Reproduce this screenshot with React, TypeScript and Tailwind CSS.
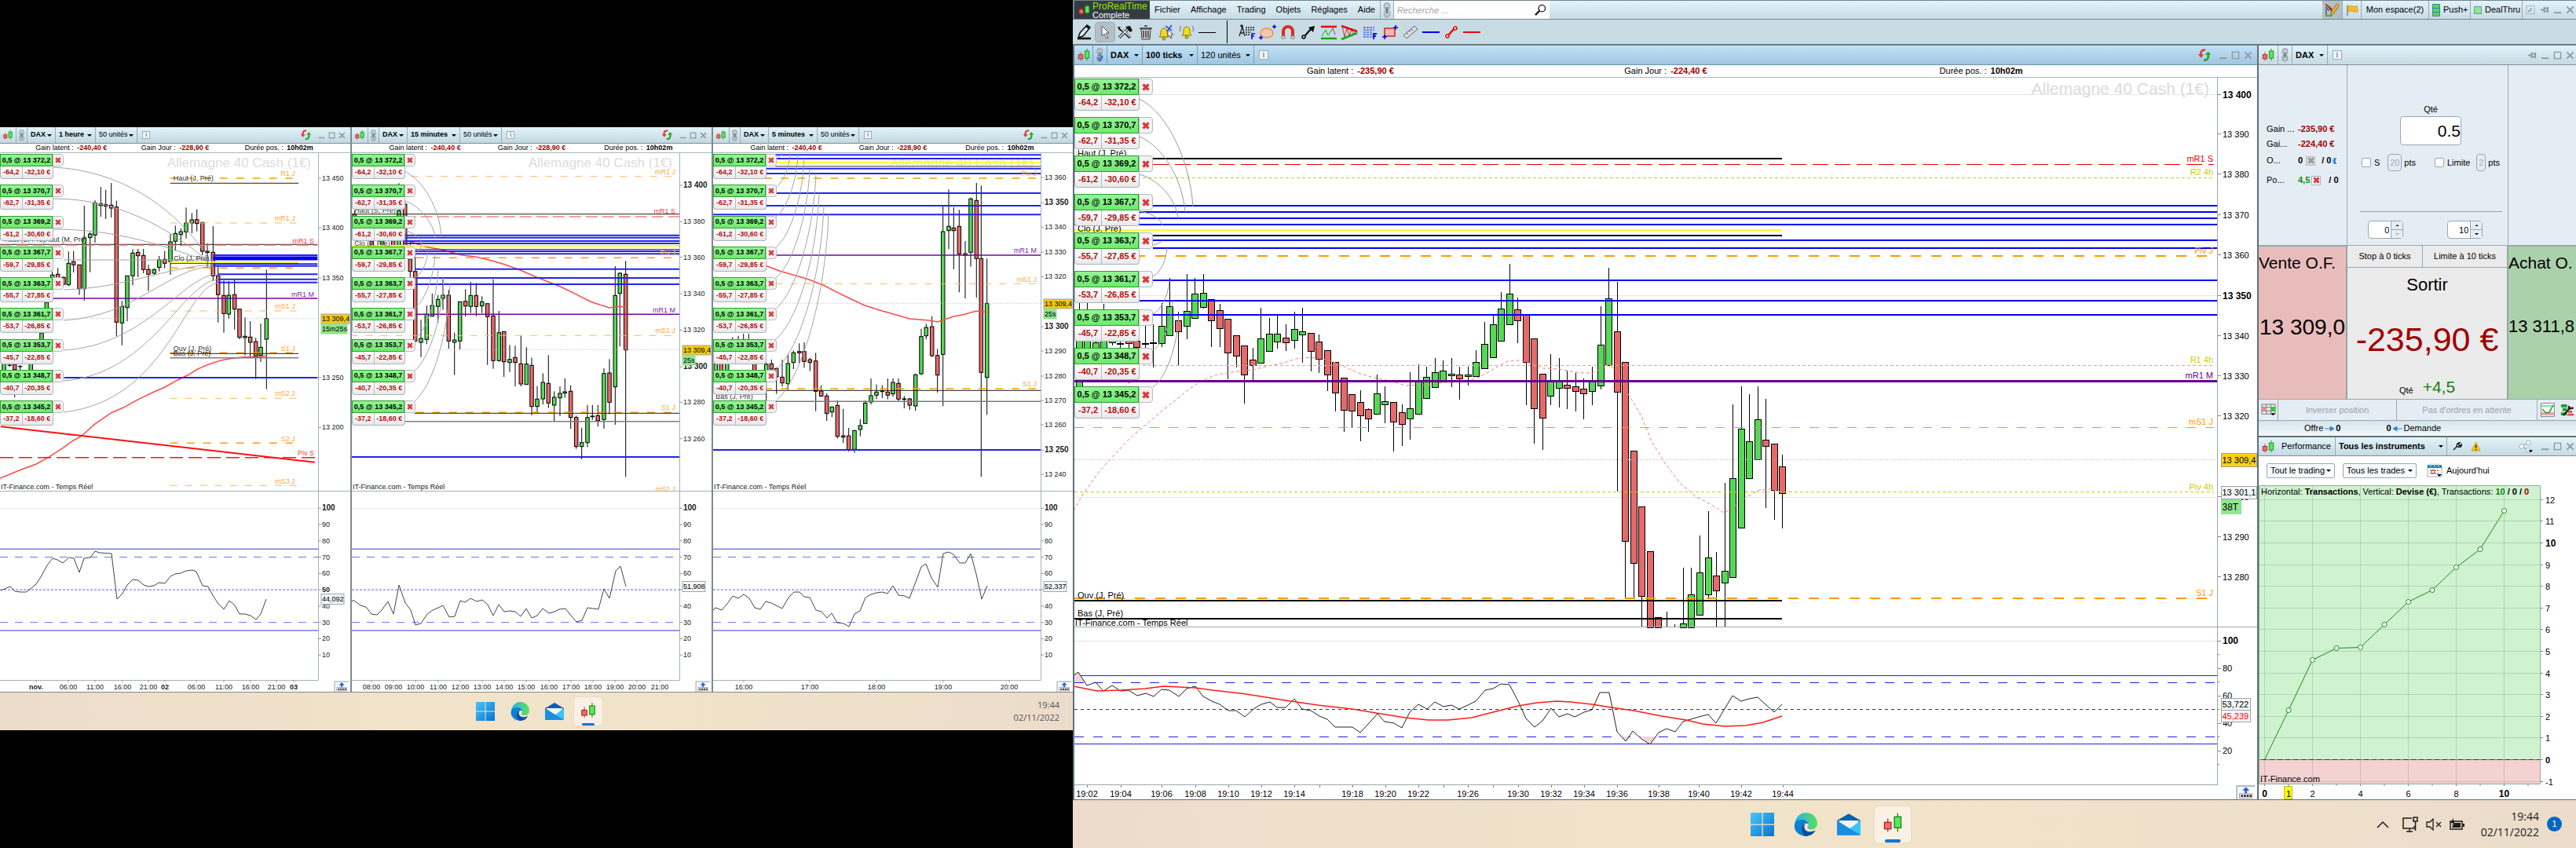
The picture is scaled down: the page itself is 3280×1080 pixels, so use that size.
import type { ReactNode } from "react";

type Candle = number[]; // x, high, low, body top, body bottom, 1 = up / 0 = down
type Level = [y: number, from: number, to: number, kind: string];
type Note = [text: string, x: number, y: number, color: string, anchor?: "end"];
type Tick = [text: string, pos: number, bold?: boolean];

const positions = [
  ["13 372,2", "-64,2", "-32,10 €"],
  ["13 370,7", "-62,7", "-31,35 €"],
  ["13 369,2", "-61,2", "-30,60 €"],
  ["13 367,7", "-59,7", "-29,85 €"],
  ["13 363,7", "-55,7", "-27,85 €"],
  ["13 361,7", "-53,7", "-26,85 €"],
  ["13 353,7", "-45,7", "-22,85 €"],
  ["13 348,7", "-40,7", "-20,35 €"],
  ["13 345,2", "-37,2", "-18,60 €"],
];

const lineStyles: Record<string, { stroke: string; width: number; dash?: string }> = {
  blue: { stroke: "#2323f0", width: 2 },
  blueBlock: { stroke: "#0000f5", width: 5 },
  purple: { stroke: "#6c0a9c", width: 1.4 },
  orange: { stroke: "#ff9d0a", width: 1.6, dash: "10 11" },
  orangeThin: { stroke: "#ffb759", width: 1, dash: "9 10" },
  red: { stroke: "#f01818", width: 1.6, dash: "17 7" },
  redThin: { stroke: "#f78080", width: 1.6, dash: "15 6" },
  black: { stroke: "#1c1c1c", width: 1 },
  gray: { stroke: "#7c7c7c", width: 1.4 },
  yellow: { stroke: "#ffff1e", width: 2 },
  dots: { stroke: "#b4b4b4", width: 1, dash: "1 2" },
  mainBlue: { stroke: "#0000f5", width: 2 },
  mainPurple: { stroke: "#64008c", width: 3 },
  mainOrange: { stroke: "#ff9900", width: 2, dash: "13 13" },
  mainOrangeThin: { stroke: "#ff9900", width: 1, dash: "12 12" },
  mainRed: { stroke: "#e60000", width: 1, dash: "20 8" },
  mainBlack: { stroke: "#000", width: 2 },
  olive: { stroke: "#cccc00", width: 1, dash: "4 3" },
};

const orange = "#ffa733";

/* The three small charts keep their samples at three units per pixel. */
const third = (n: number) => Math.round((n / 3) * 10) / 10;
const candlesOf = (rows: number[][]): Candle[] => rows.map((r) => [...r.slice(0, 5).map(third), r[5]]);
const levelsOf = (rows: Level[]): Level[] => rows.map(([y, a, b, k]) => [third(y), third(a), third(b), k]);
const notesOf = (rows: Note[]): Note[] => rows.map(([t, x, y, c, a]) => [t, third(x), third(y), c, a]);
const ticksOf = (rows: Tick[]): Tick[] => rows.map(([t, p, b]) => [t, third(p), b]);
const pathOf = (n: number[]) => {
  let d = "";
  for (let i = 0; i < n.length; i += 2) d += `${i ? "L" : "M"}${third(n[i])} ${third(n[i + 1])}`;
  return d;
};
const arc = ([x0, y0, x1, y1]: number[]) => {
  const dx = x1 - x0;
  const dy = y1 - y0;
  return `M${x0} ${y0}C${x0 + dx * 0.55} ${y0 + dy * 0.14} ${x1 - dx * 0.05} ${y0 + dy * 0.6} ${x1} ${y1}`;
};

interface SmallChart {
  period: string;
  periodClass: string;
  panelClass: string;
  left: number;
  width: number;
  axis: number;
  candles: Candle[];
  levels: Level[];
  notes: Note[];
  average: string;
  trend?: string;
  arcs: string[];
  prices: Tick[];
  priceTag: number;
  countdown: string;
  rsi: string;
  rsiTag: string;
  rsiTagY: number;
  times: Tick[];
}

const hourChart: SmallChart = {
  period: "1 heure",
  periodClass: "w-[51px]",
  panelClass: "flex-[446_1_0%]",
  left: 0,
  width: 446,
  axis: 405,
  candles: candlesOf([
    [15, 940, 965, 940, 965, 1], [37, 940, 952, 945, 946, 1], [56, 942, 1068, 942, 962, 0], [77, 945, 965, 950, 951, 1],
    [118, 940, 965, 940, 965, 1], [159, 822, 850, 822, 850, 1], [178, 705, 730, 705, 730, 1], [200, 588, 690, 601, 620, 1],
    [221, 574, 615, 598, 612, 0], [243, 606, 640, 610, 636, 0], [262, 511, 643, 556, 638, 1], [281, 509, 591, 550, 562, 0],
    [303, 562, 677, 562, 653, 0], [322, 336, 698, 460, 653, 1], [344, 437, 590, 444, 458, 1], [363, 315, 477, 325, 448, 1],
    [385, 264, 378, 328, 335, 0], [404, 275, 387, 332, 338, 0], [425, 249, 381, 334, 345, 0], [445, 317, 835, 341, 781, 0],
    [466, 700, 869, 721, 784, 1], [486, 603, 777, 604, 725, 1], [507, 502, 640, 517, 604, 1], [527, 501, 609, 514, 527, 0],
    [548, 501, 594, 526, 580, 0], [567, 561, 662, 580, 598, 0], [589, 575, 602, 580, 594, 1], [608, 528, 587, 543, 572, 1],
    [629, 509, 575, 541, 556, 0], [651, 445, 600, 474, 550, 1], [670, 412, 508, 442, 472, 1], [691, 422, 489, 435, 446, 1],
    [711, 343, 461, 402, 436, 1], [733, 364, 441, 390, 402, 1], [752, 350, 434, 389, 404, 0], [773, 398, 525, 400, 510, 0],
    [792, 480, 573, 510, 515, 0], [814, 414, 624, 514, 604, 0], [833, 567, 782, 604, 676, 0], [855, 622, 821, 679, 748, 0],
    [874, 624, 768, 678, 750, 1], [896, 617, 809, 676, 731, 0], [915, 730, 846, 731, 839, 0], [936, 762, 908, 835, 840, 1],
    [956, 777, 913, 838, 858, 0], [977, 841, 998, 855, 911, 0], [996, 786, 933, 877, 908, 1], [1018, 580, 1037, 767, 846, 1],
  ]),
  levels: levelsOf([
    [231, 650, 1118, "orange"], [250, 650, 1140, "black"], [402, 650, 1140, "orangeThin"], [484, 0, 1213, "black"],
    [487, 0, 1213, "redThin"], [556, 650, 1140, "black"], [574, 650, 1118, "orange"], [551, 650, 1140, "yellow"],
    [525, 814, 1213, "blue"], [537, 814, 1213, "blueBlock"], [559, 814, 1213, "blue"], [566, 814, 1213, "blue"],
    [598, 833, 1213, "blue"], [617, 833, 1213, "blue"], [629, 833, 1213, "blue"], [690, 200, 1213, "purple"],
    [738, 650, 1140, "orangeThin"], [767, 250, 1213, "dots"], [898, 650, 1118, "orange"], [901, 650, 1140, "black"],
    [917, 650, 1140, "gray"], [993, 245, 1213, "blue"], [1072, 650, 1140, "orangeThin"], [1243, 650, 1118, "orange"],
    [1298, 0, 1210, "red"], [1405, 650, 1140, "orangeThin"],
  ]),
  notes: notesOf([
    ["R1 J", 1127, 222, orange, "end"], ["mR1 J", 1127, 393, orange, "end"], ["mR1 S", 1200, 479, "#f04040", "end"],
    ["mR1 M", 1200, 683, "#7a1ea8", "end"], ["mS1 J", 1127, 729, orange, "end"], ["S1 J", 1127, 891, orange, "end"],
    ["mS2 J", 1127, 1062, orange, "end"], ["S2 J", 1127, 1235, orange, "end"], ["Piv S", 1200, 1290, "#f04040", "end"],
    ["mS3 J", 1127, 1397, orange, "end"], ["Haut (J, Pré)", 662, 241, "#333"], ["Clo (J, Pré)", 663, 546, "#333"],
    ["Ouv (J, Pré)", 662, 891, "#333"], ["Bas (J, Pré)", 662, 908, "#333"], ["Haut (S, Pré)", 15, 475, "#333"],
    ["Haut (M, Pré)", 170, 475, "#333"],
  ]),
  average: pathOf([0, 1377, 80, 1345, 140, 1322, 185, 1297, 240, 1262, 280, 1233, 310, 1217, 360, 1172, 425, 1127, 470, 1108, 530, 1075, 590, 1046, 630, 1029, 680, 1001, 720, 982, 755, 960, 795, 943, 840, 928, 880, 920, 930, 914, 980, 914, 1018, 910]),
  trend: pathOf([3, 1180, 1202, 1316]),
  arcs: [
    "M68 63C150 67 217 110 258 168", "M68 103C150 103 213 140 258 177", "M68 142C150 142 207 163 263 182", "M81 181H271",
    "M81 219C160 217 213 190 271 187", "M81 258C173 253 213 192 271 189", "M81 296C187 290 233 200 278 199",
    "M81 335C193 327 233 208 278 206", "M81 375C213 360 233 217 278 210",
  ],
  prices: ticksOf([["13 450", 231], ["13 400", 420], ["13 350", 612], ["13 250", 993], ["13 200", 1183]]),
  priceTag: 256,
  countdown: "15m25s",
  rsi: "M1 602L13 597 19 603 26 604 33 604 39 600 46 594 53 583 60 570 67 561 73 563 80 567 88 560 94 561 101 579 107 561 115 560 121 552 127 554 142 555 149 613 156 606 162 595 169 588 176 589 183 595 189 597 196 596 202 592 210 593 217 584 223 581 230 580 237 577 245 576 250 578 258 596 265 597 272 610 278 619 285 626 292 615 299 621 305 632 312 632 319 634 326 639 332 632 339 613",
  rsiTag: "44,092",
  rsiTagY: 613,
  times: [["nov.", 46, true], ["06:00", 87], ["11:00", 121], ["16:00", 156], ["21:00", 189], ["02", 210, true], ["06:00", 250], ["11:00", 285], ["16:00", 319], ["21:00", 352], ["03", 374, true]],
};

const quarterChart: SmallChart = {
  period: "15 minutes",
  periodClass: "w-[67px]",
  panelClass: "flex-[458_1_0%] border-l-2",
  left: 8,
  width: 458,
  axis: 425,
  candles: candlesOf([
    [34, 355, 375, 368, 378, 0], [100, 460, 495, 470, 490, 0], [140, 460, 495, 470, 490, 1], [182, 460, 495, 470, 490, 0],
    [204, 250, 500, 355, 490, 1], [227, 320, 490, 330, 490, 0], [247, 470, 610, 540, 587, 0], [266, 520, 860, 587, 853, 0],
    [288, 772, 914, 843, 858, 1], [310, 717, 865, 751, 847, 1], [331, 672, 760, 717, 758, 1], [353, 677, 783, 694, 721, 1],
    [372, 618, 734, 678, 690, 1], [394, 658, 882, 678, 853, 0], [416, 821, 983, 849, 858, 1], [437, 703, 885, 703, 853, 1],
    [458, 655, 760, 701, 719, 0], [478, 627, 746, 679, 721, 1], [499, 631, 758, 679, 721, 0], [521, 682, 746, 703, 719, 1],
    [542, 710, 944, 710, 760, 0], [564, 617, 959, 757, 928, 0], [586, 738, 932, 821, 928, 1], [605, 817, 990, 817, 932, 0],
    [627, 868, 971, 923, 935, 1], [648, 871, 1026, 916, 935, 0], [670, 832, 1026, 940, 1017, 0], [691, 877, 1019, 941, 1019, 1],
    [711, 917, 1137, 946, 1103, 0], [732, 1025, 1124, 1075, 1103, 1], [754, 976, 1096, 1011, 1074, 1], [775, 907, 1109, 1015, 1090, 0],
    [797, 1045, 1160, 1068, 1098, 1], [819, 1027, 1140, 1053, 1070, 1], [838, 996, 1070, 1047, 1052, 1], [860, 1022, 1188, 1045, 1145, 0],
    [881, 1138, 1265, 1145, 1256, 0], [902, 1184, 1305, 1241, 1256, 1], [924, 1097, 1258, 1145, 1241, 1], [943, 1097, 1154, 1140, 1142, 1],
    [964, 1097, 1180, 1138, 1157, 0], [987, 957, 1188, 977, 1153, 1], [1008, 922, 1133, 975, 1087, 0], [1030, 567, 1173, 679, 1028, 1],
    [1048, 590, 874, 594, 671, 1], [1070, 547, 1372, 598, 887, 0],
  ]),
  levels: levelsOf([
    [224, 250, 1260, "orangeThin"], [368, 20, 1275, "black"], [378, 224, 1275, "redThin"], [449, 224, 1275, "blue"],
    [458, 224, 1275, "blue"], [471, 224, 1275, "blue"], [480, 224, 1275, "blue"], [489, 20, 1275, "yellow"],
    [503, 224, 1275, "black"], [510, 262, 1275, "blue"], [520, 262, 1275, "blue"], [535, 269, 1275, "orange"],
    [578, 265, 1275, "blue"], [612, 265, 1275, "blue"], [636, 265, 1275, "blue"], [751, 262, 1275, "purple"],
    [832, 20, 1260, "orangeThin"], [886, 262, 1275, "dots"], [1126, 269, 1275, "orange"], [1129, 262, 1275, "black"],
    [1160, 220, 1275, "gray"], [1296, 20, 1275, "blue"],
  ]),
  notes: notesOf([
    ["mR1 J", 1260, 215, orange, "end"], ["mR1 S", 1260, 367, "#f04040", "end"], ["Piv J", 1260, 526, orange, "end"],
    ["mR1 M", 1260, 743, "#7a1ea8", "end"], ["mS1 J", 1260, 822, orange, "end"], ["S1 J", 1260, 1117, orange, "end"],
    ["mS2 J", 1260, 1427, orange, "end"], ["Haut (S, Pré)", 34, 362, "#333"], ["Clo (J, Pré)", 34, 490, "#333"],
  ]),
  average: pathOf([245, 472, 300, 492, 370, 504, 440, 524, 500, 532, 550, 544, 600, 558, 660, 579, 730, 609, 820, 645, 880, 674, 940, 704, 1008, 726, 1045, 721, 1070, 724]),
  arcs: [[73, 67, 122, 150], [73, 105, 114, 153], [73, 143, 97, 160], [87, 174, 97, 160], [87, 205, 105, 170], [87, 243, 114, 173], [87, 283, 118, 193], [87, 323, 125, 204], [87, 362, 133, 212]].map(arc),
  prices: ticksOf([["13 400", 258, true], ["13 380", 397], ["13 360", 533], ["13 340", 672], ["13 320", 811], ["13 300", 952, true], ["13 280", 1087], ["13 260", 1226]]),
  priceTag: 296,
  countdown: "25s",
  rsi: "M8 615L11 615 19 621 26 623 33 632 40 633 46 627 54 616 61 632 68 595 76 618 83 627 89 646 96 644 104 632 111 627 118 624 124 621 132 636 139 635 146 615 152 617 159 612 167 616 174 614 181 620 188 634 195 620 202 629 209 628 216 629 223 635 230 625 237 637 244 634 251 625 259 631 266 629 272 626 280 625 287 634 294 642 301 640 308 624 322 626 329 600 336 612 344 577 350 571 357 597",
  rsiTag: "51,908",
  rsiTagY: 597,
  times: ["08", "09", "10", "11", "12", "13", "14", "15", "16", "17", "18", "19", "20", "21"].map((h, i): Tick => [`${h}:00`, Math.round(33 + i * 28.2)]),
};

const fiveChart: SmallChart = {
  period: "5 minutes",
  periodClass: "w-[62px]",
  panelClass: "flex-[458_1_0%] border-l-2",
  left: 8,
  width: 458,
  axis: 425,
  candles: candlesOf([
    [34, 940, 965, 940, 965, 1], [55, 940, 965, 940, 965, 0], [77, 940, 965, 940, 965, 1], [98, 838, 850, 850, 850, 1],
    [120, 833, 850, 850, 850, 1], [140, 825, 850, 850, 850, 1], [160, 825, 850, 850, 850, 1], [182, 940, 965, 940, 965, 0],
    [227, 935, 1085, 942, 965, 1], [247, 924, 965, 940, 960, 0], [266, 955, 1055, 958, 990, 0], [288, 924, 1027, 991, 1013, 0],
    [310, 902, 1040, 939, 1016, 1], [331, 889, 960, 898, 935, 1], [353, 862, 937, 893, 898, 0], [372, 858, 955, 893, 931, 0],
    [394, 917, 968, 924, 935, 0], [416, 898, 1121, 929, 1045, 0], [437, 1023, 1065, 1044, 1064, 0], [458, 1053, 1158, 1063, 1130, 0],
    [478, 1103, 1144, 1105, 1124, 1], [499, 1080, 1226, 1099, 1217, 0], [521, 1112, 1243, 1215, 1220, 0], [542, 1185, 1275, 1215, 1268, 0],
    [564, 1193, 1280, 1195, 1267, 1], [586, 1152, 1217, 1176, 1191, 1], [605, 1080, 1168, 1090, 1168, 1], [627, 996, 1096, 1062, 1086, 1],
    [648, 1019, 1075, 1048, 1060, 1], [670, 1022, 1071, 1044, 1046, 1], [691, 996, 1076, 1048, 1060, 0], [711, 996, 1065, 1011, 1055, 1],
    [732, 996, 1083, 1015, 1075, 0], [754, 1063, 1110, 1074, 1076, 1], [775, 1070, 1116, 1074, 1098, 0], [797, 977, 1120, 982, 1101, 1],
    [819, 806, 983, 836, 978, 1], [838, 787, 847, 801, 833, 1], [860, 758, 914, 798, 909, 0], [881, 883, 1050, 908, 983, 0],
    [902, 337, 1102, 435, 904, 1], [924, 274, 501, 415, 431, 1], [943, 342, 579, 421, 431, 0], [964, 352, 667, 415, 520, 0],
    [987, 471, 690, 519, 525, 1], [1008, 305, 569, 310, 514, 1], [1030, 249, 687, 316, 538, 0], [1048, 259, 1372, 538, 973, 0],
    [1070, 538, 1135, 709, 992, 1],
  ]),
  levels: levelsOf([
    [142, 262, 1275, "blue"], [156, 262, 1275, "blue"], [170, 262, 1275, "yellow"], [185, 262, 1275, "gray"],
    [194, 220, 1275, "blue"], [213, 220, 1275, "blue"], [231, 220, 1275, "orange"], [288, 262, 1275, "blue"],
    [336, 220, 1275, "blue"], [370, 20, 1275, "blue"], [525, 262, 1275, "purple"], [634, 262, 1260, "orangeThin"],
    [709, 220, 1275, "dots"], [1035, 220, 1275, "orange"], [1042, 220, 1275, "black"], [1084, 262, 1275, "gray"],
    [1269, 20, 1275, "blue"],
  ]),
  notes: notesOf([
    ["Piv J", 1260, 222, orange, "end"], ["mR1 M", 1260, 517, "#7a1ea8", "end"], ["mS1 J", 1260, 626, orange, "end"],
    ["S1 J", 1260, 1026, orange, "end"], ["Bas (J, Pré)", 34, 1074, "#333"],
  ]),
  average: pathOf([20, 490, 220, 563, 280, 586, 350, 606, 390, 618, 450, 642, 500, 668, 545, 690, 605, 718, 660, 735, 710, 749, 775, 768, 850, 774, 881, 780, 940, 760, 985, 751, 1030, 738, 1070, 743]),
  arcs: [[87, 52, 96, 45], [87, 89, 106, 45], [87, 127, 116, 47], [87, 166, 124, 52], [87, 205, 131, 65], [87, 244, 139, 71], [87, 283, 143, 96], [87, 322, 149, 112], [87, 362, 155, 123]].map(arc),
  prices: ticksOf([["13 360", 228], ["13 350", 325, true], ["13 340", 418], ["13 330", 514], ["13 320", 607], ["13 300", 798, true], ["13 290", 891], ["13 280", 987], ["13 270", 1080], ["13 260", 1173], ["13 250", 1270, true], ["13 240", 1363]]),
  priceTag: 237,
  countdown: "25s",
  rsi: "M8 627L11 624 19 627 26 619 33 609 40 612 47 607 54 612 61 624 68 626 75 616 82 618 96 625 104 611 111 604 118 604 124 610 131 611 139 627 146 629 153 637 159 631 166 643 174 644 181 648 188 632 195 628 202 611 209 607 216 605 223 604 230 606 237 596 244 608 252 609 258 612 266 591 273 572 279 568 286 586 294 598 301 555 308 553 314 556 322 567 329 567 336 555 343 581 350 613 357 596",
  rsiTag: "52,337",
  rsiTagY: 597,
  times: [["16:00", 47], ["17:00", 131], ["18:00", 216], ["19:00", 301], ["20:00", 385]],
};

/* high, low, body top, body bottom, up */
const mainRows: number[][] = [
  [386, 492, 420, 492, 1], [386, 460, 425, 460, 1], [430, 460, 436, 460, 1], [387, 443, 425, 443, 1], [430, 440, 434, 436, 1],
  [433, 443, 437, 438, 1], [430, 488, 430, 437, 0], [434, 442, 434, 442, 0], [415, 444, 437, 438, 1], [413, 468, 436, 437, 1],
  [386, 442, 415, 437, 1], [354, 427, 390, 427, 1], [397, 465, 408, 422, 0], [349, 432, 396, 415, 1], [354, 405, 374, 405, 1],
  [349, 393, 373, 391, 1], [381, 442, 381, 408, 0], [387, 442, 395, 418, 0], [406, 483, 406, 449, 0], [427, 468, 427, 453, 0],
  [440, 514, 440, 477, 0], [443, 484, 458, 465, 0], [392, 462, 431, 462, 1], [405, 447, 425, 447, 1], [401, 444, 425, 435, 1],
  [413, 447, 430, 436, 0], [397, 444, 419, 433, 1], [392, 462, 422, 426, 1], [424, 473, 424, 447, 0], [426, 475, 435, 457, 0],
  [446, 498, 446, 477, 0], [461, 524, 461, 500, 0], [481, 550, 481, 522, 0], [502, 545, 502, 523, 0], [497, 562, 512, 529, 0],
  [520, 550, 521, 533, 0], [477, 527, 501, 527, 1], [492, 539, 511, 515, 1], [512, 575, 512, 537, 0], [515, 568, 525, 540, 0],
  [474, 560, 520, 533, 1], [464, 527, 485, 527, 1], [467, 507, 480, 507, 1], [456, 493, 474, 493, 1], [459, 485, 472, 485, 1],
  [456, 493, 476, 478, 1], [467, 509, 477, 482, 0], [467, 491, 477, 479, 1], [446, 479, 461, 479, 1], [410, 469, 438, 469, 1],
  [401, 455, 413, 455, 1], [372, 434, 393, 434, 1], [336, 413, 374, 413, 1], [379, 437, 394, 408, 0], [401, 516, 401, 461, 0],
  [431, 565, 431, 520, 0], [476, 573, 476, 532, 0], [451, 516, 485, 504, 1], [456, 519, 485, 494, 1], [472, 521, 490, 494, 0],
  [475, 524, 492, 498, 0], [482, 534, 495, 501, 0], [467, 516, 485, 498, 1], [390, 496, 439, 491, 1], [341, 465, 380, 465, 1],
  [359, 626, 422, 499, 0], [461, 761, 461, 689, 0], [574, 761, 574, 717, 0], [645, 799, 645, 759, 0], [702, 799, 702, 799, 0],
  [786, 799, 786, 799, 0], [779, 799, 799, 799, 0], [795, 799, 799, 799, 0], [723, 799, 794, 799, 1], [723, 799, 757, 799, 1],
  [682, 783, 729, 783, 1], [651, 761, 710, 757, 1], [703, 799, 733, 752, 0], [615, 799, 727, 742, 1], [515, 735, 609, 735, 1],
  [492, 672, 546, 672, 1], [502, 609, 562, 609, 1], [492, 585, 534, 585, 1], [508, 647, 560, 568, 0], [565, 662, 565, 624, 0],
  [579, 673, 594, 628, 0],
];
const mainCandles: Candle[] = mainRows.map(([high, low, top, bottom, up], i) => [Math.round(1373.5 + i * 10.54) + 0.5, high, low, top + 0.5, bottom + 0.5, up]);

const mainLevels: Level[] = [
  [202, 1368, 2269, "mainBlack"], [209.5, 1468, 2819, "mainRed"], [226.5, 1455, 2819, "olive"], [262, 1468, 2823, "mainBlue"],
  [270, 1451, 2823, "mainBlue"], [278, 1451, 2823, "mainBlue"], [286, 1368, 2823, "mainBlue"], [293, 1368, 2269, "yellow"],
  [300, 1468, 2269, "mainBlack"], [306, 1468, 2823, "mainBlue"], [316, 1468, 2823, "mainBlue"], [326, 1445, 2812, "mainOrange"],
  [357, 1468, 2823, "mainBlue"], [383, 1451, 2823, "mainBlue"], [401, 1468, 2823, "mainBlue"], [465.5, 1455, 2819, "olive"],
  [485.5, 1368, 2823, "mainPurple"], [544.5, 1368, 2819, "mainOrangeThin"], [585.5, 1368, 2823, "dots"],
  [626.5, 1368, 2819, "olive"], [762, 1367, 2812, "mainOrange"], [765, 1368, 2269, "mainBlack"], [788, 1368, 2269, "mainBlack"],
];
const mainNotes: Note[] = [
  ["mR1 S", 2818, 206, "#e60000", "end"], ["R2 4h", 2818, 223, "#cccc00", "end"], ["Piv J", 2818, 323, "#ff9900", "end"],
  ["R1 4h", 2818, 462, "#cccc00", "end"], ["mR1 M", 2818, 482, "#64008c", "end"], ["mS1 J", 2818, 541, "#ff9900", "end"],
  ["Piv 4h", 2818, 624, "#cccc00", "end"], ["S1 J", 2818, 759, "#ff9900", "end"], ["Haut (J, Pré)", 1372, 199, "#000"],
  ["Clo (J, Pré)", 1372, 295, "#000"], ["Ouv (J, Pré)", 1372, 762, "#000"], ["Bas (J, Pré)", 1372, 785, "#000"],
];
const mainPrices: Tick[] = [
  ["13 400", 121, true], ["13 390", 171], ["13 380", 222], ["13 370", 274], ["13 360", 325], ["13 350", 377, true],
  ["13 340", 428], ["13 330", 479], ["13 320", 530], ["13 300", 633], ["13 290", 684], ["13 280", 735],
];
const mainTimes: Tick[] = [
  ["19:02", 1384], ["19:04", 1427], ["19:06", 1479], ["19:08", 1522], ["19:10", 1564], ["19:12", 1606], ["19:14", 1648],
  ["", 1680], ["19:18", 1722], ["19:20", 1764], ["19:22", 1806], ["", 1838], ["19:26", 1869], ["", 1901], ["19:30", 1933],
  ["19:32", 1975], ["19:34", 2017], ["19:36", 2059], ["19:38", 2112], ["19:40", 2163], ["19:42", 2217], ["19:44", 2270],
];
const mainArcs = [
  [1451, 126, 1519, 263], [1451, 174, 1509, 270], [1451, 222, 1500, 278], [1451, 269, 1480, 287], [1468, 312, 1480, 306],
  [1468, 352, 1486, 316], [1468, 400, 1489, 357], [1468, 446, 1493, 383], [1468, 493, 1501, 401],
].map(arc);
const mainAverage = "M1367 650L1380 628 1400 600 1420 578 1440 557 1460 540 1480 523 1500 507 1515 495 1530 485 1550 477 1575 473 1595 471 1615 466 1635 462 1650 457 1670 455 1690 458 1710 466 1727 474 1745 480 1765 484 1790 491 1815 490 1840 487 1865 486 1885 480 1905 468 1920 460 1935 459 1950 463 1965 469 1985 470 2000 473 2015 475 2028 475 2048 464 2060 474 2072 500 2090 530 2103 562 2120 590 2140 616 2160 633 2178 642 2195 653 2205 648 2220 635 2240 624 2255 623 2269 627";
const mainRsi = "M1367 860L1373 856 1384 873 1395 869 1405 880 1416 873 1427 880 1437 879 1448 886 1459 883 1469 887 1479 878 1489 879 1501 887 1511 877 1522 874 1532 887 1543 893 1553 897 1564 905 1574 905 1585 913 1596 903 1606 897 1617 894 1626 901 1637 901 1648 890 1658 903 1669 905 1680 912 1690 916 1700 926 1722 926 1732 933 1754 909 1763 919 1775 921 1785 927 1795 907 1806 897 1817 903 1827 894 1838 900 1848 898 1858 903 1869 898 1879 893 1891 879 1901 877 1911 871 1922 872 1933 893 1943 915 1954 926 1964 918 1975 902 1985 913 1996 909 2005 913 2017 907 2027 904 2037 882 2049 882 2059 932 2070 944 2079 931 2090 941 2101 948 2112 933 2122 928 2133 932 2143 919 2163 913 2175 910 2185 921 2206 886 2217 893 2227 890 2238 888 2259 907 2269 897";
const mainRsiAverage = "M1367 874L1382 877 1397 880 1427 879 1458 877 1482 874 1522 876 1544 879 1580 883 1606 887 1637 892 1678 898 1722 903 1752 908 1789 914 1819 917 1844 917 1874 914 1901 907 1933 899 1957 895 1982 893 2000 894 2027 897 2052 901 2080 905 2116 912 2147 917 2168 922 2196 925 2223 924 2245 920 2269 912";

function Candles({ rows, width }: { rows: Candle[]; width: number }) {
  return (
    <g stroke="#000">
      {rows.map(([x, high, low, top, bottom, up], i) => (
        <g key={i}>
          <line x1={x} x2={x} y1={high} y2={low} strokeWidth="1" />
          {bottom > top && (
            <rect x={x - width / 2} y={top} width={width} height={bottom - top} fill={up ? "#56d856" : "#e66a6a"} strokeWidth="1" />
          )}
        </g>
      ))}
    </g>
  );
}

function Levels({ rows }: { rows: Level[] }) {
  return (
    <g>
      {rows.map(([y, from, to, kind], i) => {
        const style = lineStyles[kind];
        return <line key={i} x1={from} x2={to} y1={y} y2={y} stroke={style.stroke} strokeWidth={style.width} strokeDasharray={style.dash} />;
      })}
    </g>
  );
}

function Notes({ rows, size }: { rows: Note[]; size: number }) {
  return (
    <g fontSize={size}>
      {rows.map(([text, x, y, color, anchor]) => (
        <text key={text + y} x={x} y={y} fill={color} textAnchor={anchor ?? "start"}>
          {text}
        </text>
      ))}
    </g>
  );
}

function AxisTag({ x, y, width, height, size, text, fill, color = "#000", border = "#98a5ad" }: { x: number; y: number; width: number; height: number; size: number; text: string; fill: string; color?: string; border?: string }) {
  return (
    <g>
      <rect x={x} y={y - height / 2} width={width} height={height} fill={fill} stroke={border} />
      <text x={x + 1} y={y + size * 0.36} fontSize={size} fill={color}>
        {text}
      </text>
    </g>
  );
}

function KeyboardMark({ x, y, size }: { x: number; y: number; size: number }) {
  const s = size / 20;
  return (
    <g transform={`translate(${x} ${y}) scale(${s})`}>
      <path d="M0 20V0H26" fill="#f4f8fa" stroke="#98a5ad" strokeWidth="1.4" />
      <path d="M13 2l4 4h-3v4h-2V6H9z" fill="#1c5fd6" stroke="#1c5fd6" />
      <rect x="4" y="11" width="18" height="6" fill="#fff" stroke="#889" />
      <path d="M6 14h15" stroke="#333" strokeWidth="3" strokeDasharray="3 1" />
    </g>
  );
}

function CandleIcon({ className }: { className: string }) {
  return (
    <svg viewBox="0 0 20 20" className={className} aria-hidden="true">
      <path d="M5.500 6v12" stroke="#b33" />
      <rect x="2.500" y="9.500" width="6" height="6" fill="#f26a6a" stroke="#b02a2a" />
      <path d="M14.500 1v17" stroke="#1d8a1d" />
      <rect x="11.500" y="4.500" width="6" height="10" fill="#5be65b" stroke="#1d8a1d" />
    </svg>
  );
}

function LinkIcon({ checked, className }: { checked?: boolean; className: string }) {
  return (
    <svg viewBox="0 0 12 20" className={className} fill="none" aria-hidden="true">
      <rect x="3" y="1.500" width="6" height="7" rx="3" stroke="#6b7780" strokeWidth="2.400" />
      <rect x="3" y="11" width="6" height="7" rx="3" stroke="#6b7780" strokeWidth="2.400" />
      <rect x="3" y="1.500" width="6" height="7" rx="3" stroke="#fff" />
      <rect x="3" y="11" width="6" height="7" rx="3" stroke="#fff" />
      <path d="M6 6v8" stroke="#6b7780" strokeWidth="2" />
      {checked && <path d="M3 14l3 4 4-7" stroke="#1c5fd6" strokeWidth="2" />}
    </svg>
  );
}

function WindowControls({ large, pin, fixed }: { large?: boolean; pin?: boolean; fixed?: boolean }) {
  const size = large ? "size-[11px]" : "size-[9px]";
  const button = large ? "grid w-4 place-items-center" : "grid w-[13px] place-items-center";
  return (
    <div className="flex items-center text-[#8b9aa3]">
      {pin && (
        <button className={button} aria-label="Épingler">
          <svg viewBox="0 0 12 12" className={size}><path d="M0 6h5M5 2v8M5 4h5v4H5M10 2v8" stroke="currentColor" strokeWidth="2" fill="none" /></svg>
        </button>
      )}
      <button className={button} aria-label="Réduire">
        <svg viewBox="0 0 12 12" className={size}><path d="M1 10h10" stroke="currentColor" strokeWidth="2" /></svg>
      </button>
      {!fixed && (
        <button className={button} aria-label="Agrandir">
          <svg viewBox="0 0 12 12" className={size}><path d="M1.500 1.500h9v9h-9z" stroke="currentColor" strokeWidth="1.500" fill="none" /></svg>
        </button>
      )}
      <button className={button} aria-label="Fermer">
        <svg viewBox="0 0 12 12" className={size}><path d="M1.500 1.500l9 9M10.500 1.500l-9 9" stroke="currentColor" strokeWidth="2" /></svg>
      </button>
    </div>
  );
}

function RefreshIcon({ className }: { className: string }) {
  return (
    <svg viewBox="0 0 20 18" className={className} fill="none" aria-hidden="true">
      <path d="M11 2C6 1 4 5 5 9" stroke="#e33d3d" strokeWidth="3" />
      <path d="M1 8h8l-4 5z" fill="#e33d3d" />
      <path d="M9 16c5 1 7-3 6-7" stroke="#26a826" strokeWidth="3" />
      <path d="M11 9h8l-4-5z" fill="#26a826" />
    </svg>
  );
}

function InfoMark({ large }: { large?: boolean }) {
  return (
    <button
      aria-label="Informations"
      className={`ml-1.5 grid place-items-center border border-[#9dadb5] bg-[#f2f6f8] font-['Liberation_Serif',serif] leading-none font-bold text-[#85939b] ${large ? "size-3 text-[10px]" : "size-[10px] text-[8px]"}`}
    >
      i
    </button>
  );
}

function Picker({ label, value, className, bold }: { label: string; value: string; className: string; bold?: boolean }) {
  return (
    <span className={`relative flex items-center ${className}`}>
      <select aria-label={label} className={`h-full w-full appearance-none bg-transparent pl-1 text-black outline-none ${bold ? "font-bold" : ""}`}>
        <option>{value}</option>
      </select>
      <svg viewBox="0 0 8 4" className="pointer-events-none absolute right-1 w-[6px]" aria-hidden="true">
        <path d="M0 0h8L4 4z" fill="#000" />
      </svg>
    </span>
  );
}

function GainRow({ latent, day, large }: { latent: string; day: string; large?: boolean }) {
  const width = large ? "w-4/5" : "w-[89%]";
  return (
    <div className={`flex items-center justify-center border-b border-[#a9b8c0] bg-white leading-none text-black ${large ? "h-4 text-[11px]" : "h-3 text-[9px]"}`}>
      <div className={`grid grid-cols-3 text-center whitespace-nowrap ${width}`}>
        <span>Gain latent : <b className="ml-0.5 text-[#a00000]">{latent}</b></span>
        <span>Gain Jour : <b className="ml-0.5 text-[#a00000]">{day}</b></span>
        <span>Durée pos. : <b className="ml-0.5">10h02m</b></span>
      </div>
    </div>
  );
}

function CrossIcon({ className, color = "#d83a3a" }: { className: string; color?: string }) {
  return (
    <svg viewBox="0 0 10 10" className={className} aria-hidden="true">
      <path d="M1.500 1.500l7 7M8.500 1.500l-7 7" stroke={color} strokeWidth="3.200" />
    </svg>
  );
}

function PositionTags({ large }: { large?: boolean }) {
  return (
    <ul className={`absolute top-px left-0 flex flex-col justify-between ${large ? "h-[433px] text-[11px]" : "h-[346px] text-[9px]"}`}>
      {positions.map(([price, points, gain]) => (
        <li key={price} className="leading-none font-bold">
          <div className="flex">
            <button className={`border border-[#2f9e2f] bg-linear-to-b from-[#93f593] to-[#6fe86f] whitespace-nowrap text-black ${large ? "h-[21px] w-[82px]" : "h-[16px] w-[67px]"}`}>
              0,5 @ {price}
            </button>
            <button aria-label={`Fermer ${price}`} className={`grid place-items-center rounded-r-sm border border-[#b4bcc2] bg-[#f3f3f3] ${large ? "w-[18px]" : "w-[14px]"}`}>
              <CrossIcon className={large ? "size-[10px]" : "size-[8px]"} />
            </button>
          </div>
          <div className={`flex items-center rounded-b-sm border border-t-0 border-[#a9b4bb] bg-linear-to-b from-white to-[#e9e9e9] text-center text-[#b01010] ${large ? "h-5 w-[83px]" : "h-4 w-[68px]"}`}>
            <span className="flex h-full w-[42%] items-center justify-center border-r border-[#b4bcc2]">{points}</span>
            <span className="flex-1 whitespace-nowrap">{gain}</span>
          </div>
        </li>
      ))}
    </ul>
  );
}

function SmallChartPanel({ chart }: { chart: SmallChart }) {
  const { left, width, axis } = chart;
  const rsiY = (v: number) => 705 - 2.078 * v;
  return (
    <section className={`min-w-0 border-[#7d8a90] bg-white ${chart.panelClass}`}>
      <header className="flex h-[21px] items-stretch border-b border-[#7f9099] bg-linear-to-b from-[#e3f4fa] to-[#c2d8e0] text-[9px]">
        <span className="grid w-[21px] place-items-center border-r border-[#9aabb4]"><CandleIcon className="size-[14px]" /></span>
        <button aria-label="Lier" className="grid w-[14px] place-items-center border-r border-[#9aabb4]"><LinkIcon className="h-[15px]" /></button>
        <Picker label="Instrument" value="DAX" bold className="w-[36px] border-r border-[#9aabb4]" />
        <Picker label="Période" value={chart.period} bold className={`border-r border-[#9aabb4] ${chart.periodClass}`} />
        <Picker label="Unités" value="50 unités" className="w-[53px] border-r border-[#9aabb4]" />
        <span className="flex items-center"><InfoMark /></span>
        <span className="ml-auto flex items-center gap-1.5 pr-1"><RefreshIcon className="w-[15px]" /><WindowControls /></span>
      </header>
      <GainRow latent="-240,40 €" day="-228,90 €" />
      <div className="relative">
        <svg viewBox={`${left} 45 ${width} 687`} className="block w-full font-['Liberation_Sans',sans-serif]">
          <text x={axis - 9} y="63" fontSize="17" fill="#dcdcdc" textAnchor="end">Allemagne 40 Cash (1€)</text>
          <Candles rows={chart.candles} width={4.5} />
          <path d={chart.average} fill="none" stroke="#fb4a4a" strokeWidth="1.500" />
          {chart.trend && <path d={chart.trend} stroke="#ff1010" strokeWidth="2" />}
          <Levels rows={chart.levels} />
          <g fill="none" stroke="#a3a3a3">{chart.arcs.map((d) => <path key={d} d={d} />)}</g>
          <Notes rows={chart.notes} size={9} />
          <text x={left + 1} y="473" fontSize="9" fill="#222">IT-Finance.com - Temps Réel</text>

          <rect x={left} y="475" width={width} height="260" fill="#fff" />
          <path d={`M${left} 475.500H${left + width}M${left} 716.500H${axis}`} stroke="#a3b2ba" />
          <path d={`M${left} 497.500H${axis}`} stroke="#ececec" />
          <path d={`M${left} ${rsiY(75)}H${axis}M${left} ${rsiY(25)}H${axis}`} stroke="#7a7ae6" strokeWidth="1.500" />
          <path d={`M${left} ${rsiY(70)}H${axis}M${left} ${rsiY(30)}H${axis}`} stroke="#7070e2" strokeDasharray="10 9" />
          <path d={`M${left} ${rsiY(50)}H${axis}`} stroke="#6060dd" strokeDasharray="3 2" />
          <path d={chart.rsi} fill="none" stroke="#444" />

          <path d={`M${axis + 0.5} 45V716.500`} stroke="#a3b2ba" />
          {chart.prices.map(([text, y, bold]) => (
            <g key={text}>
              <path d={`M${axis} ${y}h4`} stroke="#8c9aa2" />
              <text x={axis + 5} y={y + 3} fontSize={bold ? 10 : 9} fontWeight={bold ? 700 : 400} fill="#222">{text}</text>
            </g>
          ))}
          {[10, 20, 30, 40, 50, 60, 70, 80, 90, 100].map((v) => (
            <g key={v}>
              <path d={`M${axis} ${rsiY(v)}h4`} stroke="#8c9aa2" />
              <text x={axis + 5} y={rsiY(v) + 3} fontSize={v === 100 ? 10 : 9} fontWeight={v % 50 ? 400 : 700} fill="#222">{v}</text>
            </g>
          ))}
          <AxisTag x={axis + 4} y={chart.priceTag} width={36} height={12} size={9} text="13 309,4" fill="#f7cb0a" />
          <AxisTag x={axis + 4} y={chart.priceTag + 13} width={chart.countdown.length > 3 ? 33 : 16} height={12} size={9} text={chart.countdown} fill="#8ee48e" border="#8ee48e" />
          <AxisTag x={axis + 4} y={chart.rsiTagY} width={29} height={13} size={9} text={chart.rsiTag} fill="#f4f6f7" />
          {chart.times.map(([text, x, bold]) => (
            <g key={x}>
              <path d={`M${x} 716v3`} stroke="#8c9aa2" />
              <text x={x} y="728" fontSize="9" fontWeight={bold ? 700 : 400} textAnchor="middle" fill="#222">{text}</text>
            </g>
          ))}
          <KeyboardMark x={left + width - 20} y={718} size={14} />
          <path d={`M${left} 731.500H${left + width}`} stroke="#7d8a90" />
        </svg>
        <PositionTags />
      </div>
    </section>
  );
}

function TaskbarApps({ large }: { large?: boolean }) {
  const icon = large ? "size-[30px]" : "size-[24px]";
  return (
    <nav aria-label="Applications" className={`flex items-center ${large ? "gap-[25px] pl-4" : "gap-5 pl-2"}`}>
      <button aria-label="Démarrer">
        <svg viewBox="0 0 24 24" className={icon}>
          <defs><linearGradient id="win" x1="0" y1="0" x2="1" y2="1"><stop stopColor="#45c8f8" /><stop offset="1" stopColor="#0873d0" /></linearGradient></defs>
          <path d="M0 0h11.500v11.500H0zM12.500 0H24v11.500H12.500zM0 12.500h11.500V24H0zM12.500 12.500H24V24H12.500z" fill="url(#win)" />
        </svg>
      </button>
      <button aria-label="Edge">
        <svg viewBox="0 0 24 24" className={icon}>
          <defs><linearGradient id="edge"><stop stopColor="#1fb2ea" /><stop offset="1" stopColor="#5fe05a" /></linearGradient></defs>
          <path d="M1 11C2 4 7 0 12.500 0 19 0 24 5 24 11c0 4-3 6-6 6-3 0-4-1-4-2 0-1 1-1 1-3 0-3-3-5-6-5-4 0-7 2-8 4z" fill="url(#edge)" />
          <path d="M1 11c1-3 4-4 8-4 3 0 6 2 6 5-1-1-2-1.500-3-1-4 1-4 9 2 11 1 .5 1 1.500-1 2C6 24-1 19 1 11z" fill="#0d7fd6" />
          <path d="M12 11c-6 2-5 10 0 13 5 0 9-3 10-6-4 2-10 2-11-2-1-2 0-4 1-5z" fill="#0b4f9e" />
        </svg>
      </button>
      <button aria-label="Courrier">
        <svg viewBox="0 0 24 24" className={icon}>
          <path d="M0 8l12-7 12 7v4H0z" fill="#0a5fb4" />
          <path d="M2 8h20v6l-10 5-10-5z" fill="#f5f5f5" />
          <path d="M0 8l12 9L24 8v15H0z" fill="#38c4f4" />
          <path d="M0 8l24 15H0z" fill="#1c8ee0" />
        </svg>
      </button>
      <button aria-label="ProRealTime" className={`-ml-2 flex flex-col items-center justify-end rounded-md border border-[#eadcc6] bg-[#faf1e4] ${large ? "h-12 w-12" : "h-[38px] w-[38px]"}`}>
        <CandleIcon className={large ? "my-auto size-7" : "my-auto size-[22px]"} />
        <span className={`rounded-full bg-[#0078d7] ${large ? "h-1 w-5" : "h-[3px] w-4"}`} />
      </button>
    </nav>
  );
}

function Tool({ label, children, active }: { label: string; children: ReactNode; active?: boolean }) {
  return (
    <button aria-label={label} className={`grid h-[26px] w-[26px] place-items-center ${active ? "rounded-sm border border-[#a0adb5] bg-[#b3c0c8]" : ""}`}>
      <svg viewBox="0 0 22 22" className="size-[22px]" fill="none">{children}</svg>
    </button>
  );
}

function Bell() {
  return (
    <g>
      <path d="M5 15c2-2 2-4 2-6 0-3 2-5 4-5s4 2 4 5c0 2 0 4 2 6z" fill="#f5dc1e" stroke="#8a7a10" />
      <circle cx="11" cy="17" r="2" fill="#d8b800" stroke="#8a7a10" />
    </g>
  );
}

function Toolbar() {
  return (
    <div className="flex h-[33px] items-center border-b-2 border-[#6d7d86] bg-[#c9dbe5] pl-0.5">
      <Tool label="Dessiner"><path d="M3 18l2-6L14 2l4 3-9 11z" fill="#dfe8ec" stroke="#111" strokeWidth="1.500" /><path d="M14 2l4 3-2 2-4-3z" fill="#111" /><path d="M2 19h17" stroke="#000" strokeWidth="2.500" /></Tool>
      <Tool label="Pointeur" active><path d="M7 3v13l3-3 3 6 2-1-3-6h4z" fill="#fff" stroke="#555" /></Tool>
      <Tool label="Outils"><path d="M3 18L14 7M3 4c0 4 4 4 6 6l8 8" stroke="#222" strokeWidth="3.500" /><path d="M3 18L14 7M4 5l13 12" stroke="#eee" strokeWidth="1.500" /><path d="M11 4l6-1 3 6-3 2z" fill="#111" /></Tool>
      <Tool label="Supprimer"><path d="M5 7h12l-1 13H6z" fill="#d9d9d9" stroke="#333" /><path d="M3 6h16M9 3h4M8 9v9M11 9v9M14 9v9" stroke="#333" strokeWidth="1.500" /></Tool>
      <Tool label="Alerte au curseur"><g transform="translate(-3 2)"><Bell /></g><path d="M10 3l8 6M18 2l-6 8" stroke="#1a3df0" strokeWidth="1.500" /><path d="M13 8v9l2-2 2 4 1-1-1-4h3z" fill="#fff" stroke="#555" /></Tool>
      <Tool label="Alertes"><Bell /><path d="M4 3c-2 2-2 5-1 7M18 3c2 2 2 5 1 7" stroke="#666" /></Tool>
      <Tool label="Ligne"><path d="M0 11.500h22" stroke="#000" /></Tool>
      <span className="mx-3 h-[29px] w-px bg-black" />
      <Tool label="Texte"><path d="M1 16l4-12 3 12M2 12h5M4 1v4M2 3h4" stroke="#222" strokeWidth="1.300" /><path d="M9 5h12M9 8h12M9 11h7M9 14h6" stroke="#222" strokeWidth="1.500" strokeDasharray="2 1" /><path d="M17 20v-7h4M17 16h3" stroke="#0000f0" strokeWidth="1.600" /></Tool>
      <Tool label="Ellipse"><ellipse cx="10" cy="12" rx="8" ry="6" fill="#f0c8b4" stroke="#f09040" strokeWidth="1.500" /><path d="M17 4h5M19.500 1.500v5M0 18h5M2.500 15.500v5" stroke="#0000f0" strokeWidth="1.500" /></Tool>
      <Tool label="Aimant"><path d="M5 18v-8a6 6 0 0 1 12 0v8" stroke="#d83020" strokeWidth="4" /><path d="M3 16h4v3H3zM15 16h4v3h-4z" fill="#eee" stroke="#777" /></Tool>
      <Tool label="Flèche"><circle cx="5" cy="17" r="2" stroke="#000" strokeWidth="1.500" /><path d="M7 15l8-9" stroke="#000" strokeWidth="2" /><path d="M19 3l-2 8-6-6z" fill="#000" /></Tool>
      <Tool label="Canal"><path d="M1 4h20" stroke="#f00000" strokeWidth="2.500" /><path d="M1 19h20" stroke="#12a812" strokeWidth="2.500" /><path d="M2 16l5-8 3 7 6-9" stroke="#12a812" /><path d="M16 6l3 8" stroke="#d03030" /></Tool>
      <Tool label="Biseau"><path d="M1 3l20 7" stroke="#f00000" strokeWidth="2.500" /><path d="M1 20l20-8" stroke="#12a812" strokeWidth="2.500" /><path d="M2 3l3 14 3-11 3 9 3-7 3 5" stroke="#d03030" /></Tool>
      <Tool label="Fibonacci"><path d="M3 5h14M3 8h14M3 11h11M3 14h11M3 17h11" stroke="#3b74ea" strokeWidth="1.300" strokeDasharray="3 1" /><path d="M16 20v-7h4M16 16h3" stroke="#0000f0" strokeWidth="1.800" /></Tool>
      <Tool label="Rectangle"><path d="M4 6h13v10H4z" fill="#f0b8bc" stroke="#e02020" strokeWidth="1.500" /><path d="M15 5h6M18 2v6M1 17h6M4 14v6" stroke="#0000f0" strokeWidth="1.500" /></Tool>
      <Tool label="Règle"><path d="M2 15L16 3l4 4L6 19z" fill="#ddd" stroke="#666" /><path d="M6 12l2 2M9 9l2 2M12 7l2 2" stroke="#555" /></Tool>
      <Tool label="Ligne bleue"><path d="M0 11h22" stroke="#0000f0" strokeWidth="2" /></Tool>
      <Tool label="Segment"><path d="M6 16l10-11" stroke="#f00000" strokeWidth="2.500" /><circle cx="6" cy="16" r="2" fill="#fff" stroke="#f00000" strokeWidth="1.500" /><circle cx="16" cy="6" r="2" fill="#fff" stroke="#f00000" strokeWidth="1.500" /></Tool>
      <Tool label="Ligne rouge"><path d="M0 11h22" stroke="#f00000" strokeWidth="2" /></Tool>
    </div>
  );
}

function MenuBar() {
  return (
    <div className="flex h-[25px] items-stretch border-y border-l-2 border-[#74848d] bg-linear-to-b from-[#e2f3fa] to-[#c9dce5] text-[11px] leading-none text-black">
      <div className="flex w-[96px] items-center bg-[#343c42] pl-1">
        <CandleIcon className="size-[17px]" />
        <div className="pl-0.5">
          <p className="text-[12px] leading-3 text-[#8fe01c]">ProRealTime</p>
          <p className="leading-[10px] text-white">Complete</p>
        </div>
      </div>
      <nav className="flex items-center gap-[13px] px-1.5">
        {["Fichier", "Affichage", "Trading", "Objets", "Réglages", "Aide"].map((item) => (
          <a key={item} href="#">{item}</a>
        ))}
      </nav>
      <button aria-label="Lier" className="grid w-[18px] place-items-center border-x border-[#9aabb4]"><LinkIcon className="h-5" /></button>
      <label className="flex w-[198px] items-center bg-white pr-1">
        <input aria-label="Recherche" placeholder="Recherche ..." className="w-full min-w-0 pl-1 italic outline-none placeholder:text-[#a5a5a5]" />
        <svg viewBox="0 0 16 16" className="size-[15px] shrink-0" fill="none"><circle cx="10" cy="6" r="4.500" stroke="#222" strokeWidth="1.500" /><path d="M7 9l-6 6" stroke="#222" strokeWidth="2.500" /></svg>
      </label>
      <div className="ml-auto flex items-stretch">
        <button aria-label="Dessin" className="grid w-[25px] place-items-center bg-[#b3c0c8]">
          <svg viewBox="0 0 20 18" className="w-[19px]" fill="none"><path d="M1 2l9 8M2 16V5l3 5 2-4 3 8" stroke="#333" /><path d="M1 1l9 7" stroke="#e02020" strokeWidth="1.500" /><path d="M9 12l7-11 3 2-7 11-4 2z" fill="#f0b830" stroke="#8a6a10" /><path d="M1 17h9" stroke="#12a812" strokeWidth="1.500" /></svg>
        </button>
        <button aria-label="Drapeau" className="grid w-[25px] place-items-center border-x border-[#9aabb4]">
          <svg viewBox="0 0 18 18" className="w-4"><path d="M2 2v15" stroke="#777" strokeWidth="1.500" /><path d="M3 3c5-2 6 2 13 0l1 8c-6 2-8-2-13 0z" fill="#f8bc28" stroke="#d89a10" /></svg>
        </button>
        <button className="w-[86px] border-r border-[#9aabb4]">Mon espace(2)</button>
        <button className="flex w-[53px] items-center gap-1 border-r border-[#9aabb4] pl-1">
          <svg viewBox="0 0 10 16" className="h-4"><path d="M.500 .500h9v15h-9z" fill="#5ad65a" stroke="#3b82a0" /><path d="M0 5.500h10M0 10.500h10" stroke="#3b82a0" /></svg>Push+
        </button>
        <button className="flex w-[66px] items-center gap-1 border-r border-[#9aabb4] pl-1"><span className="size-[10px] border border-[#6a9ab0] bg-[#90e690]" />DealThru</button>
        <svg viewBox="0 0 14 14" className="mx-1 w-3 text-[#8b9aa3]" fill="none"><path d="M1 1h12v12H1z" stroke="currentColor" strokeDasharray="2 1" /><path d="M4 10l5-5" stroke="currentColor" strokeWidth="2" /></svg>
        <WindowControls large pin fixed />
      </div>
    </div>
  );
}

function MainChart() {
  return (
    <section className="min-w-0 flex-[1506_1_0%] border-r-2 border-l-2 border-[#5f7079] bg-white">
      <header className="flex h-[25px] items-stretch border-b border-[#6d93ad] bg-linear-to-b from-[#c1e2f8] to-[#a1c6e0] text-[11px]">
        <span className="grid w-[24px] place-items-center border-r border-[#7aa0ba]"><CandleIcon className="size-[18px]" /></span>
        <button aria-label="Lier" className="grid w-[18px] place-items-center border-r border-[#7aa0ba]"><LinkIcon checked className="h-[18px]" /></button>
        <Picker label="Instrument" value="DAX" bold className="w-[45px] border-r border-[#7aa0ba]" />
        <Picker label="Période" value="100 ticks" bold className="w-[70px] border-r border-[#7aa0ba]" />
        <Picker label="Unités" value="120 unités" className="w-[72px] border-r border-[#7aa0ba]" />
        <span className="flex items-center"><InfoMark large /></span>
        <span className="ml-auto flex items-center gap-1.5 pr-1"><RefreshIcon className="w-[18px]" /><WindowControls large /></span>
      </header>
      <GainRow latent="-235,90 €" day="-224,40 €" large />
      <div className="relative">
        <svg viewBox="1368 99 1506 920" className="block w-full font-['Liberation_Sans',sans-serif]">
          <path d="M1368 120.500H2823M1368 376.500H2823M1368 633.500H2823M1368 816.500H2823" stroke="#e6e6e6" />
          <text x="2813" y="120" fontSize="21" fill="#dadada" textAnchor="end">Allemagne 40 Cash (1€)</text>
          <Candles rows={mainCandles} width={8} />
          <path d={mainAverage} fill="none" stroke="#f08080" strokeDasharray="4 3" />
          <Levels rows={mainLevels} />
          <g fill="none" stroke="#999">{mainArcs.map((d) => <path key={d} d={d} />)}</g>
          <Notes rows={mainNotes} size={11} />
          <text x="1369" y="797" fontSize="11">IT-Finance.com - Temps Réel</text>

          <path d="M1368 798.500H2874M1368 999.500H2823" stroke="#9aa7ae" />
          <path d="M1368 860.500H2823M1368 947.500H2823" stroke="#2323d8" />
          <path d="M1368 869.500H2823M1368 938.500H2823" stroke="#2323d8" strokeDasharray="12 12" />
          <path d="M1368 903.500H2823" stroke="#2323d8" strokeDasharray="4 4" />
          <path d="M1368 869V859L1373 856 1382 869zM2063 938L2070 944 2074 938zM2088 938L2101 948 2109 938z" fill="#ecd8d8" />
          <path d={mainRsi} fill="none" stroke="#222" />
          <path d={mainRsiAverage} fill="none" stroke="#ff1a1a" strokeWidth="1.500" />

          <path d="M2823.500 99V1000" stroke="#9aa7ae" />
          {mainPrices.map(([text, y, bold]) => (
            <g key={text}>
              <path d={`M2824 ${y - 0.5}h4`} stroke="#77858d" />
              <text x="2830" y={y + 4} fontSize={bold ? 12 : 11} fontWeight={bold ? 700 : 400}>{text}</text>
            </g>
          ))}
          {[100, 80, 60, 40, 20].map((v, i) => (
            <g key={v}>
              <path d={`M2824 ${816.5 + i * 35}h4M2824 ${833.5 + i * 35}h2`} stroke="#77858d" />
              <text x="2830" y={820 + i * 35} fontSize={i ? 11 : 12} fontWeight={i ? 400 : 700}>{v}</text>
            </g>
          ))}
          <AxisTag x={2828.5} y={586} width={45} height={17} size={11} text="13 309,4" fill="#fcd116" />
          <AxisTag x={2828.5} y={645.5} width={25} height={18} size={12} text="38T" fill="#90e690" border="#90e690" />
          <AxisTag x={2828.5} y={627.5} width={45} height={16} size={11} text="13 301,1" fill="#f4f6f7" />
          <AxisTag x={2828.5} y={897} width={37} height={15} size={11} text="53,722" fill="#f4f6f7" />
          <AxisTag x={2828.5} y={912} width={37} height={15} size={11} text="45,239" fill="#f4f6f7" color="#f00" />
          {mainTimes.map(([text, x]) => (
            <g key={x}>
              <path d={`M${x + 0.5} 1000v3`} stroke="#77858d" />
              <text x={x} y="1015" fontSize="11" textAnchor="middle">{text}</text>
            </g>
          ))}
          <KeyboardMark x={2848} y={1001} size={18} />
          <path d="M1368 1018.500H2874" stroke="#5f7079" />
        </svg>
        <PositionTags large />
      </div>
    </section>
  );
}

function Spinner({ label, value }: { label: string; value: string }) {
  return (
    <span className="flex h-[23px] w-[45px] rounded-sm border border-[#98a9b2] bg-white">
      <input aria-label={label} defaultValue={value} className="w-[29px] min-w-0 pr-0.5 text-right outline-none" />
      <span className="flex w-[15px] flex-col border-l border-[#98a9b2] bg-[#e4eff4]">
        <button aria-label={`${label} plus`} className="grid flex-1 place-items-center border-b border-[#98a9b2]"><svg viewBox="0 0 6 3" className="w-[5px]"><path d="M0 3h6L3 0z" /></svg></button>
        <button aria-label={`${label} moins`} className="grid flex-1 place-items-center"><svg viewBox="0 0 6 3" className="w-[5px]"><path d="M0 0h6L3 3z" fill={value === "0" ? "#aaa" : "#000"} /></svg></button>
      </span>
    </span>
  );
}

function OrderTicket() {
  return (
    <section className="bg-[#e4edf3] text-[11px] leading-none text-black">
      <header className="flex h-[25px] items-stretch border-b border-[#7f9099] bg-linear-to-b from-[#e3f4fa] to-[#c5dae3]">
        <span className="grid w-[25px] place-items-center border-r border-[#9aabb4]"><CandleIcon className="size-[18px]" /></span>
        <button aria-label="Lier" className="grid w-[18px] place-items-center border-r border-[#9aabb4]"><LinkIcon className="h-[18px]" /></button>
        <Picker label="Instrument" value="DAX" bold className="w-[45px] border-r border-[#9aabb4]" />
        <span className="flex items-center"><InfoMark large /></span>
        <span className="ml-auto flex"><WindowControls large pin /></span>
      </header>
      <div className="flex h-[230px] border-b border-[#98a9b2]">
        <dl className="grid w-[113px] shrink-0 auto-rows-[19px] grid-cols-[40px_1fr] content-start items-center overflow-hidden border-r border-[#98a9b2] pt-[72px] pl-2.5 whitespace-nowrap">
          <dt>Gain ...</dt><dd className="font-bold text-[#a00000]">-235,90 €</dd>
          <dt>Gai...</dt><dd className="font-bold text-[#a00000]">-224,40 €</dd>
          <dt className="mt-1">O...</dt>
          <dd className="mt-1 flex items-center gap-1 font-bold">
            0<button aria-label="Annuler les ordres" className="grid size-3 place-items-center border border-[#b4bcc2] bg-[#ddd]"><CrossIcon className="size-[9px]" color="#999" /></button>
            <span className="ml-1">/ 0</span>
            <svg viewBox="0 0 5 10" className="-ml-0.5 h-[10px]" fill="none"><path d="M5 2H3v2M5 8H3V6M0 5h4M1 2l2 2M1 8l2-2" stroke="#1c7fe0" strokeWidth="1.500" /></svg>
          </dd>
          <dt className="mt-4">Po...</dt>
          <dd className="mt-4 flex items-center gap-0.5 font-bold">
            <span className="text-[#108a10]">4,5</span><button aria-label="Fermer la position" className="grid size-3 place-items-center border border-[#9ab4cc] bg-white"><CrossIcon className="size-[9px]" color="#f03030" /></button>
            <span className="ml-2">/ 0</span>
          </dd>
        </dl>
        <div className="flex w-[205px] shrink-0 flex-col items-center border-r border-[#98a9b2] pt-[51px] pl-2">
          <label htmlFor="qty" className="pb-[3px]">Qté</label>
          <input id="qty" defaultValue="0.5" className="h-[37px] w-[78px] rounded-sm border border-[#98a9b2] bg-white text-right text-[21px] outline-none" />
          <div className="mt-[11px] flex h-[22px] items-center">
            <label className="flex items-center gap-1"><input type="checkbox" className="size-3 appearance-none rounded-xs border border-[#98a9b2] bg-white" />S</label>
            <input aria-label="Points de stop" defaultValue="20" disabled className="mr-[3px] ml-2.5 h-[22px] w-[18px] rounded-sm border border-[#98a9b2] text-center text-[#a0abb2]" />pts
            <label className="ml-6 flex items-center gap-1"><input type="checkbox" className="size-3 appearance-none rounded-xs border border-[#98a9b2] bg-white" />Limite</label>
            <input aria-label="Points de limite" defaultValue="2" disabled className="mr-[3px] ml-2 h-[22px] w-3 rounded-sm border border-[#98a9b2] text-center text-[#a0abb2]" />pts
          </div>
          <hr className="mt-[51px] w-[181px] border-[#98a9b2]" />
          <div className="mt-[11px] flex w-full gap-14 pl-[18px]">
            <Spinner label="Stop" value="0" />
            <Spinner label="Limite" value="10" />
          </div>
        </div>
      </div>
      <div className="flex h-[195px]">
        <button className="flex w-[113px] shrink-0 flex-col border-t border-r-2 border-[#98a3aa] bg-[#e9bcbc] pt-2.5 text-left whitespace-nowrap">
          <span className="text-[21px]">Vente O.F.</span>
          <span className="pt-[58px] pl-px text-[28px]">13 309,0</span>
        </button>
        <div className="flex w-[205px] shrink-0 flex-col border-r-2 border-[#98a3aa] bg-[#ebebeb]">
          <div className="flex h-[28px] border-b border-[#98a9b2]">
            <button className="w-[96px] border-r border-[#98a9b2]">Stop à 0 ticks</button>
            <button className="flex-1">Limite à 10 ticks</button>
          </div>
          <button className="flex flex-1 flex-col items-center pt-[11px]">
            <span className="text-[22px]">Sortir</span>
            <span className="pt-[37px] text-[43px] whitespace-nowrap text-[#a00000]">-235,90 €</span>
            <span className="flex items-end gap-3 pt-7">Qté <span className="text-[21px] text-[#108010]">+4,5</span></span>
          </button>
        </div>
        <button className="flex min-w-0 flex-1 flex-col border-t border-[#98a3aa] bg-[#abd1ab] pt-2.5 text-left whitespace-nowrap">
          <span className="text-[21px]">Achat O.</span>
          <span className="pt-[60px] text-[22px]">13 311,8</span>
        </button>
      </div>
      <div className="flex h-[28px] items-stretch border-y border-[#98a9b2] text-[#98a3aa]">
        <button aria-label="Grille" className="grid w-[25px] place-items-center border-r border-[#98a9b2]">
          <svg viewBox="0 0 20 16" className="w-[19px]" fill="none"><path d="M1 1h18v13H1zM1 5h18M1 10h18M7 1v13M13 1v13" stroke="#777" /><path d="M1 5h6v5H1z" fill="#e88" /><path d="M13 5h6v5h-6z" fill="#3c3" /><path d="M13 13h6l-3 3z" fill="#000" /></svg>
        </button>
        <button disabled className="w-[151px] border-r border-[#98a9b2]">Inverser position</button>
        <button disabled className="flex-1">Pas d'ordres en attente</button>
        <button aria-label="Objectifs" className="grid w-[26px] place-items-center border-l border-[#98a9b2]">
          <svg viewBox="0 0 18 18" className="w-[18px]" fill="none"><path d="M.500 .500h17v17H.500z" fill="#fff" stroke="#889" /><path d="M1 4h16" stroke="#90dc90" strokeWidth="2" /><path d="M1 14h16" stroke="#f5a0a0" strokeWidth="4" /><path d="M2 8l5 5 4-1 5-9" stroke="#12a030" strokeWidth="1.500" /></svg>
        </button>
        <button aria-label="Réglages" className="grid w-[24px] place-items-center">
          <svg viewBox="0 0 18 18" className="w-[17px]" fill="none"><path d="M1 3h8M3 8h6M1 14h8" stroke="#12a030" strokeWidth="4" /><path d="M10 6h8M10 11h6M10 15h8" stroke="#e05050" strokeWidth="3" /><path d="M4 16l9-10M11 3l2 4 4-1" stroke="#111" strokeWidth="2" /></svg>
        </button>
      </div>
      <div className="flex h-[21px] items-center border-b-2 border-[#5f7079] bg-linear-to-b from-[#d3e3eb] to-[#f2f8fa] pl-[58px]">
        Offre <svg viewBox="0 0 12 6" className="mx-0.5 w-3"><path d="M0 3h8M7 0l5 3-5 3z" stroke="#3b86d8" fill="#3b86d8" /></svg><b>0</b>
        <b className="ml-[58px]">0</b><svg viewBox="0 0 12 6" className="mx-0.5 w-3"><path d="M4 3h8M5 0L0 3l5 3z" stroke="#3b86d8" fill="#3b86d8" /></svg> Demande
      </div>
    </section>
  );
}

const equity = [967, 904, 840, 825, 824, 795, 766, 751, 722, 699, 650].map((y, i) => [2883.5 + i * 30.5, y + 0.5]);

function Performance() {
  return (
    <section className="bg-white text-[11px] leading-none text-black">
      <header className="flex h-[24px] items-stretch border-b border-[#7f9099] bg-linear-to-b from-[#e3f4fa] to-[#c5dae3]">
        <span className="grid w-[24px] place-items-center"><CandleIcon className="size-[18px]" /></span>
        <h2 className="flex w-[74px] items-center border-r border-[#9aabb4] pl-[5px]">Performance</h2>
        <Picker label="Instruments" value="Tous les instruments" bold className="w-[142px] border-r border-[#9aabb4]" />
        <button aria-label="Configurer" className="grid w-6 place-items-center">
          <svg viewBox="0 0 14 14" className="w-[13px]" fill="none"><path d="M2 12l5-5M7 7c-1-3 1-5 4-5L9 4l1 2 2 0 1-2c1 3-2 5-6 3z" stroke="#000" strokeWidth="1.300" /></svg>
        </button>
        <button aria-label="Avertissement" className="grid w-6 place-items-center">
          <svg viewBox="0 0 14 14" className="w-[13px]"><path d="M7 1l6 12H1z" fill="#fcc81e" stroke="#d89a10" /><path d="M7 5v4M7 10.500v1.500" stroke="#000" strokeWidth="1.500" /></svg>
        </button>
        <button aria-label="Partager" className="mr-1 ml-auto grid w-6 place-items-center">
          <svg viewBox="0 0 20 18" className="w-[19px]" fill="none"><path d="M4 9l9-5M4 9l9 5" stroke="#9aa7ae" /><circle cx="4" cy="9" r="3" fill="#fff" stroke="#9aa7ae" /><circle cx="13" cy="4" r="3" fill="#fff" stroke="#9aa7ae" /><circle cx="13" cy="14" r="3" fill="#fff" stroke="#9aa7ae" /><path d="M13 14h6l-3 3z" fill="#000" /></svg>
        </button>
        <WindowControls large />
      </header>
      <div className="flex h-9 items-center pl-2.5">
        <Picker label="Trading" value="Tout le trading" className="h-[19px] w-[87px] rounded-xs border border-[#98a9b2] bg-[#f8fafb]" />
        <Picker label="Trades" value="Tous les trades" className="ml-2.5 h-[19px] w-[94px] rounded-xs border border-[#98a9b2] bg-[#f8fafb]" />
        <button className="ml-[13px] flex items-center gap-[5px]">
          <svg viewBox="0 0 20 20" className="size-5" fill="none"><path d="M1 4h18v14H1z" fill="#fff" stroke="#9ab" /><path d="M1 3h18v4H1z" fill="#2288c8" /><path d="M5 1v4M10 1v4M15 1v4" stroke="#ccc" strokeWidth="1.500" /><path d="M4 10h12M4 14h12" stroke="#9ab" strokeWidth="2" strokeDasharray="2 1" /><path d="M6 10h4v4H6z" stroke="#e03030" /><path d="M13 15h6l-3 3z" fill="#000" /></svg>
          Aujourd'hui
        </button>
      </div>
      <svg viewBox="2876 617 404 402" className="block w-full font-['Liberation_Sans',sans-serif]" fontSize="11">
        <rect x="2876" y="618" width="358" height="349" fill="#cff2cf" />
        <rect x="2876" y="967" width="358" height="31" fill="#f4d2d2" />
        {Array.from({ length: 14 }, (_, i) => i - 1).map((v) => {
          const y = Math.round(967 - v * 27.6) + 0.5;
          const bold = v === 10;
          return (
            <g key={v}>
              <path d={`M2876 ${y}H3234`} stroke="#000" strokeOpacity="0.120" />
              <path d={`M3234 ${y}h4`} stroke="#77858d" />
              <text x="3241" y={y + 4} fontSize={bold ? 12 : 11} fontWeight={bold || v === 0 ? 700 : 400}>{v}</text>
            </g>
          );
        })}
        {[0, 2, 4, 6, 8, 10].map((v) => <path key={v} d={`M${2883.5 + v * 30.5} 618V998`} stroke="#000" strokeOpacity="0.120" />)}
        {Array.from({ length: 12 }, (_, v) => <path key={v} d={`M${2883.5 + v * 30.5} 998v3`} stroke="#77858d" />)}
        <path d="M2876 967.500H3234" stroke="#e05050" />
        <path d="M2880 967.500H3234" stroke="#2323e0" strokeDasharray="6 4" />
        <path d="M2876.500 618.500H3234.500V998.500H2876.500z" fill="none" stroke="#8fae93" />
        <text x="2879" y="630">
          Horizontal: <tspan fontWeight="700">Transactions</tspan>, Vertical: <tspan fontWeight="700">Devise (€)</tspan>, Transactions:{" "}
          <tspan fontWeight="700" fill="#108010">10</tspan><tspan fontWeight="700"> / 0 / </tspan><tspan fontWeight="700" fill="#a00000">0</tspan>
        </text>
        <polyline points={equity.map((p) => p.join(",")).join(" ")} fill="none" stroke="#1e8c1e" />
        {equity.slice(1).map(([x, y]) => <circle key={x} cx={x} cy={y} r="3" fill="#fff" stroke="#1e8c1e" />)}
        <text x="2878" y="996">IT-Finance.com</text>
        <rect x="2908.500" y="1001.500" width="10" height="16" fill="#ffff00" stroke="#b5b54a" />
        {[0, 1, 2, 4, 6, 8, 10].map((v) => (
          <text key={v} x={2883.5 + v * 30.5} y="1015" textAnchor="middle" fontSize={v % 10 ? 11 : 12} fontWeight={v % 10 ? 400 : 700}>{v}</text>
        ))}
        <path d="M2876 1018.500H3280" stroke="#5f7079" />
      </svg>
    </section>
  );
}

export default function App() {
  return (
    <main className="flex min-h-screen bg-black font-['Liberation_Sans',Arial,sans-serif]">
      <div className="min-w-0 flex-[1366_1_0%] pt-[162px]">
        <div className="flex">
          <SmallChartPanel chart={hourChart} />
          <SmallChartPanel chart={quarterChart} />
          <SmallChartPanel chart={fiveChart} />
        </div>
        <footer className="grid h-12 grid-cols-[1fr_auto_1fr] items-center bg-linear-to-r from-[#eddccb] via-[#f2e4ca] to-[#ecdccb]">
          <span />
          <TaskbarApps />
          <p className="pr-[17px] text-right font-['Open_Sans',sans-serif] text-[11px] leading-4 text-[#555]">19:44<br />02/11/2022</p>
        </footer>
      </div>
      <div className="flex min-w-0 flex-[1914_1_0%] flex-col">
        <MenuBar />
        <Toolbar />
        <div className="flex">
          <MainChart />
          <div className="min-w-0 flex-[404_1_0%] bg-white">
            <OrderTicket />
            <Performance />
          </div>
        </div>
        <footer className="grid flex-1 grid-cols-[1fr_auto_1fr] items-center bg-linear-to-r from-[#eddccb] via-[#f2e4ca] to-[#ecdccb] text-[#1c1c1c]">
          <span />
          <TaskbarApps large />
          <div className="flex items-center justify-end pr-[18px]">
            <svg viewBox="0 0 16 10" className="mr-[17px] w-4" fill="none"><path d="M1 9l7-7 7 7" stroke="currentColor" strokeWidth="1.500" /></svg>
            <svg viewBox="0 0 20 20" className="mr-2.5 size-5" fill="none"><path d="M12 2H1v13h14v-3M5 19h8M9 15v4" stroke="currentColor" strokeWidth="1.500" /><path d="M14 1h5v5h-5zM16.500 6v12" stroke="currentColor" strokeWidth="1.500" /></svg>
            <svg viewBox="0 0 20 16" className="mr-2.5 w-5" fill="none"><path d="M1 5h4l4-4v14l-4-4H1z" stroke="currentColor" strokeWidth="1.300" /><path d="M13 5l6 6M19 5l-6 6" stroke="currentColor" strokeWidth="1.300" /></svg>
            <svg viewBox="0 0 20 16" className="mr-5 w-5" fill="none"><path d="M1 4h15v10H1z" stroke="currentColor" strokeWidth="1.500" /><path d="M6 6h8v6H3z" fill="currentColor" /><path d="M18 7v4" stroke="currentColor" strokeWidth="2" /><path d="M5 0L1 6h3l-1 4 4-6H5z" fill="currentColor" /></svg>
            <p className="text-right font-['Open_Sans',sans-serif] text-[14px] leading-5">19:44<br />02/11/2022</p>
            <span className="ml-2.5 grid size-[19px] place-items-center rounded-full bg-[#0067c0] text-[11px] leading-none text-white">1</span>
          </div>
        </footer>
      </div>
    </main>
  );
}
